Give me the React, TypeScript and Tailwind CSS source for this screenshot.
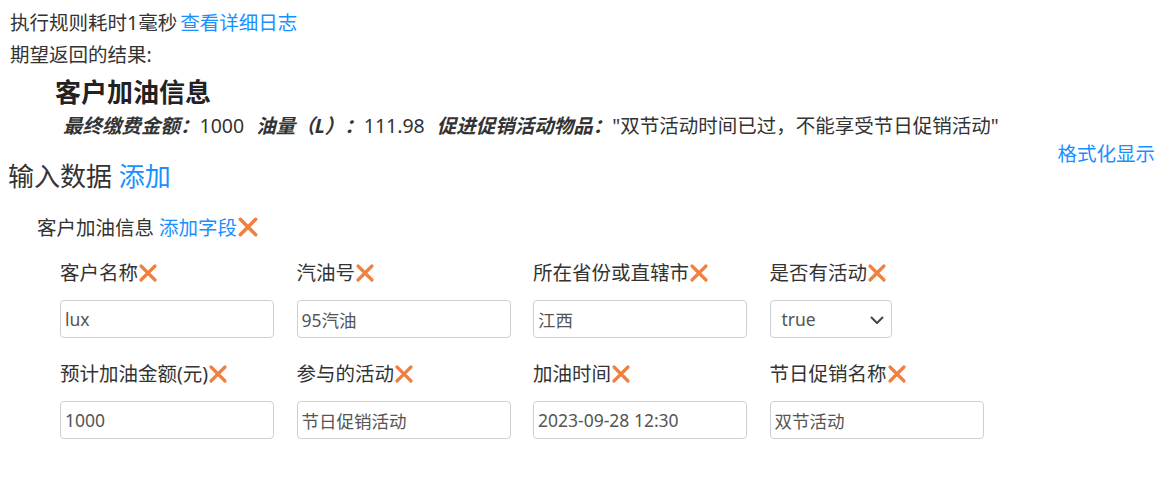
import React from 'react';

const font = "font-['Noto_Sans','Noto_Sans_CJK_SC',sans-serif]";

const XIcon = ({ size = 20 }: { size?: number }) => (
  <svg width={size} height={size} viewBox="0 0 20 20" className="inline-block align-[-3px]">
    <path d="M3 3 L17 17 M17 3 L3 17" stroke="#f08040" strokeWidth="3.2" strokeLinecap="round" />
  </svg>
);

interface Field {
  label: string;
  value: string;
  select?: boolean;
}

const fields: Field[] = [
  { label: '客户名称', value: 'lux' },
  { label: '汽油号', value: '95汽油' },
  { label: '所在省份或直辖市', value: '江西' },
  { label: '是否有活动', value: 'true', select: true },
  { label: '预计加油金额(元)', value: '1000' },
  { label: '参与的活动', value: '节日促销活动' },
  { label: '加油时间', value: '2023-09-28 12:30' },
  { label: '节日促销名称', value: '双节活动' },
];

const App: React.FC = () => {
  return (
    <div className={`${font} w-[1175px] h-[478px] bg-white text-[#333] text-[19.5px] pt-[11px] overflow-hidden`}>
      {/* execution info */}
      <div className="pl-[10px] leading-[24px]">
        执行规则耗时1毫秒<span className="text-[#1890ff] ml-[3px]">查看详细日志</span>
      </div>
      <div className="pl-[10px] leading-[24px] mt-[8px]">期望返回的结果:</div>

      {/* expected result */}
      <div className="pl-[55px] mt-[10px] text-[26px] font-bold leading-[30px] text-[#222]">客户加油信息</div>
      <div className="pl-[63px] mt-[7px] leading-[24px] whitespace-nowrap">
        <b className="italic">最终缴费金额：</b>
        <span className="mr-[12px]">1000</span>
        <b className="italic">油量（L）：</b>
        <span className="mr-[12px]">111.98</span>
        <b className="italic">促进促销活动物品：</b>
        <span>"双节活动时间已过，不能享受节日促销活动"</span>
      </div>

      {/* input data header */}
      <div className="flex justify-between items-start mt-[4px] pr-[20px]">
        <div className="pl-[8px] pt-[19px] text-[26px] leading-[30px]">
          输入数据 <span className="text-[#1890ff]">添加</span>
        </div>
        <div className="text-[#1890ff] leading-[24px]">格式化显示</div>
      </div>

      <div className="pl-[37px] mt-[25px] leading-[24px]">
        客户加油信息 <span className="text-[#1890ff]">添加字段</span>
        <XIcon size={22} />
      </div>

      {/* fields */}
      <div className="grid grid-cols-[214px_214px_214px_214px] gap-x-[22.5px] gap-y-[24px] pl-[60px] mt-[21px]">
        {fields.map((f) => (
          <div key={f.label}>
            <div className="leading-[24px] whitespace-nowrap">
              {f.label}
              <XIcon />
            </div>
            {f.select ? (
              <div className="relative mt-[15px] w-[122px] h-[38px] border border-[#ccd0d6] rounded-[4px] flex items-center pl-[11px] text-[17.5px] text-[#555]">
                true
                <svg width="14" height="9" viewBox="0 0 14 9" className="absolute right-[7px] top-[15px]">
                  <path d="M1.5 1.5 L7 7 L12.5 1.5" fill="none" stroke="#444" strokeWidth="2" strokeLinecap="round" strokeLinejoin="round" />
                </svg>
              </div>
            ) : (
              <input
                readOnly
                value={f.value}
                className="mt-[15px] w-[214px] h-[38px] border border-[#ccd0d6] rounded-[4px] pl-[4px] text-[17.5px] text-[#555] outline-none block"
              />
            )}
          </div>
        ))}
      </div>
    </div>
  );
};

export default App;
